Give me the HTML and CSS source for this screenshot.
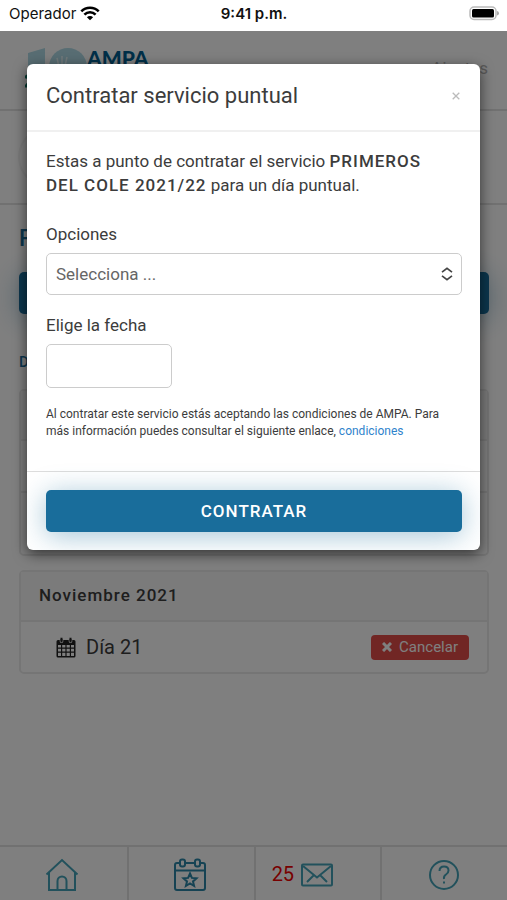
FILE: index.html
```html
<!DOCTYPE html>
<html lang="es">
<head>
<meta charset="utf-8">
<meta name="viewport" content="width=device-width, initial-scale=1">
<title>Contratar servicio puntual</title>
<link rel="stylesheet" href="styles.css">
</head>
<body>
<div class="status">
  <span class="carrier">Operador
    <svg width="20" height="15" viewBox="0 0 20 15" fill="none" stroke="#000" stroke-width="2.6"><path d="M1.3 5.3a12.3 12.3 0 0 1 17.4 0M4.4 8.6a7.9 7.9 0 0 1 11.2 0"/><path d="M10 14.3 6.9 11.2a4.4 4.4 0 0 1 6.2 0z" fill="#000" stroke="none"/></svg>
  </span>
  <span class="clock">9:41 p.m.</span>
  <span class="battery"><svg width="31" height="15" viewBox="0 0 31 15"><rect x="2" y="1" width="26" height="12.500" rx="4" fill="#fff" stroke="#bbb" stroke-width="1.500"/><rect x="4" y="3" width="22" height="8.500" rx="1.500"/><path d="M29 5v4.500q2-.6 2-2.250T29 5z" fill="#aaa"/></svg></span>
</div>

<div class="app">
  <header class="topbar">
    <div class="logo">
      <svg width="62" height="42" viewBox="0 0 62 42"><path d="M3 6 20 1v37H3z" fill="#b0dbe6"/><circle cx="43" cy="20" r="19" fill="#b0dbe6"/><path d="M32 11l2 9M37 9v11M42 10l-2 9" stroke="#e2f2f6" stroke-width="1.500"/><path d="M0 31q3-4 6-1 1 3-5 9h6" fill="none" stroke="#087464" stroke-width="3"/></svg>
      <strong>AMPA</strong>
    </div>
    <a class="settings" href="#">Ajustes</a>
  </header>
  <div class="profile"><span class="avatar"></span></div>

  <main class="content">
    <h1>P</h1>
    <button class="primary" type="button" aria-label="Contratar"></button>
    <h2>D</h2>
    <section class="card">
      <div class="card-head"></div>
      <div class="card-row"></div>
      <div class="card-row tall"></div>
    </section>
    <section class="card">
      <h3 class="card-head">Noviembre 2021</h3>
      <div class="card-row">
        <svg width="20" height="21" viewBox="0 0 20 21"><path fill="#222" fill-rule="evenodd" d="M2 3h2v2.500h3V3h6v2.500h3V3h2q1.500 0 1.500 1.500V19q0 1.500-1.500 1.500H2Q.5 20.500.5 19V4.500Q.5 3 2 3zm0 5v2.600h3V8zm4.200 0v2.600h3.200V8zm4.400 0v2.600h3.200V8zM15 8v2.600h3V8zM2 11.800v2.800h3v-2.800zm4.200 0v2.800h3.200v-2.800zm4.400 0v2.800h3.200v-2.800zm4.400 0v2.800h3v-2.800zM2 15.800v3.200h3v-3.200zm4.200 0v3.200h3.200v-3.200zm4.400 0v3.200h3.200v-3.200zm4.400 0v3.200h3v-3.200z"/><rect x="4" y=".5" width="3" height="5" rx="1.400" fill="#222" stroke="#fff" stroke-width=".6"/><rect x="13" y=".5" width="3" height="5" rx="1.400" fill="#222" stroke="#fff" stroke-width=".6"/></svg>
        <span class="day">Día 21</span>
        <button class="cancel" type="button"><svg width="10" height="10" viewBox="0 0 10 10"><path d="M1 1l8 8M9 1 1 9" stroke="#fff" stroke-width="3"/></svg>Cancelar</button>
      </div>
    </section>
  </main>

  <nav class="tabs">
    <a href="#" aria-label="Inicio"><svg width="34" height="34" viewBox="0 0 34 34"><path d="M1.500 16.500 17 2l15.500 14.500M4 14.500V32h26V14.500M12.500 32V23a4.500 4.500 0 0 1 9 0v9"/></svg></a>
    <a href="#" aria-label="Servicios"><svg class="bold" width="34" height="34" viewBox="0 0 34 34"><path d="M7 5H4Q2 5 2 7v23q0 2 2 2h26q2 0 2-2V7q0-2-2-2h-3M12 5h10M2 12.500h30"/><rect x="7" y="1.500" width="5" height="7" rx="2"/><rect x="22" y="1.500" width="5" height="7" rx="2"/><path d="m17 15.500 1.900 4.400 4.600.4-3.500 3.100 1.100 4.600-4.100-2.500-4.100 2.500 1.100-4.600-3.500-3.100 4.600-.4z"/></svg></a>
    <a class="messages" href="#" aria-label="Mensajes"><span class="count">25</span><svg width="32" height="34" viewBox="0 0 32 34"><rect x="1" y="6.500" width="30" height="21" rx="1"/><path d="M2 8l14 11.500L30 8M6 24l7-7M26 24l-7-7"/></svg></a>
    <a href="#" aria-label="Ayuda"><svg width="34" height="34" viewBox="0 0 34 34"><circle cx="17" cy="17" r="14"/><path d="M12.500 13q0-4.500 4.500-4.500t4.500 4q0 2.500-2.500 4T17 21M17 23.500v2"/></svg></a>
  </nav>

  <div class="backdrop">
    <div class="modal" role="dialog" aria-labelledby="title">
      <div class="modal-head">
        <h2 id="title">Contratar servicio puntual</h2>
        <button class="close" type="button" aria-label="Cerrar"><svg width="8" height="8" viewBox="0 0 8 8"><path d="M.7.7l6.600 6.600M7.300.7.7 7.300" stroke="#bbb" stroke-width="1.300"/></svg></button>
      </div>
      <form class="modal-body" id="booking">
        <p class="intro">Estas a punto de contratar el servicio <b>PRIMEROS DEL COLE 2021/22</b> para un día puntual.</p>
        <div class="field">
          <label for="option">Opciones</label>
          <div class="picker">
            <select id="option"><option>Selecciona ...</option></select>
            <svg width="12" height="14" viewBox="0 0 12 14"><path d="M1 5.200 6 1.300l5 3.900M1 8.800l5 3.900 5-3.900" fill="none" stroke="#444" stroke-width="1.700"/></svg>
          </div>
        </div>
        <div class="field">
          <label for="date">Elige la fecha</label>
          <input id="date" type="text">
        </div>
        <p class="terms">Al contratar este servicio estás aceptando las condiciones de AMPA. Para más información puedes consultar el siguiente enlace, <a href="#">condiciones</a></p>
      </form>
      <div class="modal-foot"><button class="primary" type="submit" form="booking">CONTRATAR</button></div>
    </div>
  </div>
</div>
</body>
</html>
```
FILE: styles.css
```css
* { box-sizing: border-box; }
body {
  margin: 0;
  min-height: 100vh;
  display: flex;
  flex-direction: column;
  background: #fff;
  color: #3c3c3c;
  font: 17px/24px Roboto, sans-serif;
}
h1, h2, h3, p { margin: 0; font-weight: 400; }
a { text-decoration: none; }
button { font-family: inherit; border: 0; padding: 0; cursor: pointer; }
svg { display: block; flex: none; }

.status {
  display: grid;
  grid-template-columns: 1fr auto 1fr;
  align-items: center;
  height: 31px;
  padding: 0 8px 4px 9px;
  color: #111;
  font: 15px/20px Inter, sans-serif;
}
.carrier { display: flex; align-items: center; gap: 4px; }
.clock { font-weight: 600; }
.battery { justify-self: end; }

.app { position: relative; flex: 1; display: flex; flex-direction: column; }
.topbar {
  display: flex;
  justify-content: space-between;
  height: 80px;
  padding: 16px 19px 0 25px;
  border-bottom: 2px solid #e2e2e2;
}
.logo { display: flex; }
.logo strong { color: #005f91; font: 900 21px/22px Lato, sans-serif; }
.settings { color: #b4b4b4; padding-top: 9px; }
.profile { height: 94px; padding: 16px 18px; border-bottom: 2px solid #e2e2e2; }
.avatar { display: block; width: 60px; height: 60px; border: 2px solid #f4f4f4; border-radius: 50%; }

.content { flex: 1; padding: 20px 18px 0 19px; }
.content h1 { color: #1a6f9e; font-size: 23px; font-weight: 500; line-height: 28px; }
.content h2 { margin: 36px 0 15px; color: #1a6f9e; font-size: 15px; font-weight: 500; line-height: 24px; }
.primary {
  display: block;
  width: 100%;
  height: 42px;
  border-radius: 5px;
  background: #196d9b;
  color: #fff;
  font-size: 17px;
  font-weight: 500;
  letter-spacing: 1px;
  box-shadow: 0 4px 28px rgba(25, 109, 155, .4);
}
.content .primary { margin-top: 19px; }
.card { margin-bottom: 14px; border: 2px solid #eaeaea; border-radius: 5px; }
.card-head {
  height: 50px;
  padding: 11px 18px;
  border-bottom: 2px solid #eaeaea;
  background: #f6f6f6;
  font-size: 17px;
  letter-spacing: 1px;
}
h3.card-head { font-weight: 500; }
.card-row { display: flex; align-items: center; height: 50px; padding: 0 18px 0 35px; }
.card-row.tall { height: 63px; border-top: 2px solid #eaeaea; }
.day { flex: 1; margin-left: 10px; font-size: 20px; }
.cancel {
  display: flex;
  align-items: center;
  gap: 7px;
  height: 25px;
  padding: 0 11px;
  border-radius: 4px;
  background: #e34c48;
  color: #fff;
  font-size: 15px;
}

.tabs { display: grid; grid-template-columns: repeat(4, 1fr); height: 55px; border-top: 2px solid #e2e2e2; }
.tabs a { display: flex; align-items: center; justify-content: center; gap: 7px; padding-right: 2px; }
.tabs a + a { border-left: 2px solid #e2e2e2; }
.tabs svg { margin-top: 2px; fill: none; stroke: #45a3b8; stroke-width: 2; }
.tabs .bold { stroke: #2c87a8; }
.tabs .messages { padding-right: 31px; }
.count { color: #f00000; font-size: 20px; }

.backdrop { position: absolute; inset: 0; padding: 33px 27px; background: rgba(0, 0, 0, .5); }
.modal {
  overflow: hidden;
  border-radius: 6px;
  background: #fff;
  box-shadow: 0 4px 14px rgba(0, 0, 0, .6);
}
.modal-head {
  display: flex;
  align-items: center;
  justify-content: space-between;
  height: 68px;
  padding: 0 20px 2px 19px;
  border-bottom: 2px solid #f0f0f0;
}
.modal-head h2 { font-size: 22px; line-height: 28px; }
.close { background: none; padding: 0; }
.modal-body { padding: 17px 18px 31px 19px; }
.intro { padding-right: 12px; line-height: 24px; }
.intro b { font-weight: 500; letter-spacing: 1px; }
.field { margin-top: 25px; }
.field label { display: block; margin-bottom: 7px; line-height: 24px; }
.picker { position: relative; }
.picker svg { position: absolute; right: 9px; top: 14px; pointer-events: none; }
select, input {
  display: block;
  border: 1px solid #ccc;
  border-radius: 5px;
  background: #fff;
  color: #666;
  font: 17px/24px Roboto, sans-serif;
}
select { appearance: none; width: 100%; height: 42px; padding: 0 9px; }
input { width: 126px; height: 44px; padding: 0 9px; }
.field + .field { margin-top: 18px; }
.terms { margin-top: 18px; font-size: 12px; line-height: 17px; }
.terms a { color: #2f83cc; }
.modal-foot { padding: 18px 18px 18px 19px; border-top: 1px solid #ddd; }
```
